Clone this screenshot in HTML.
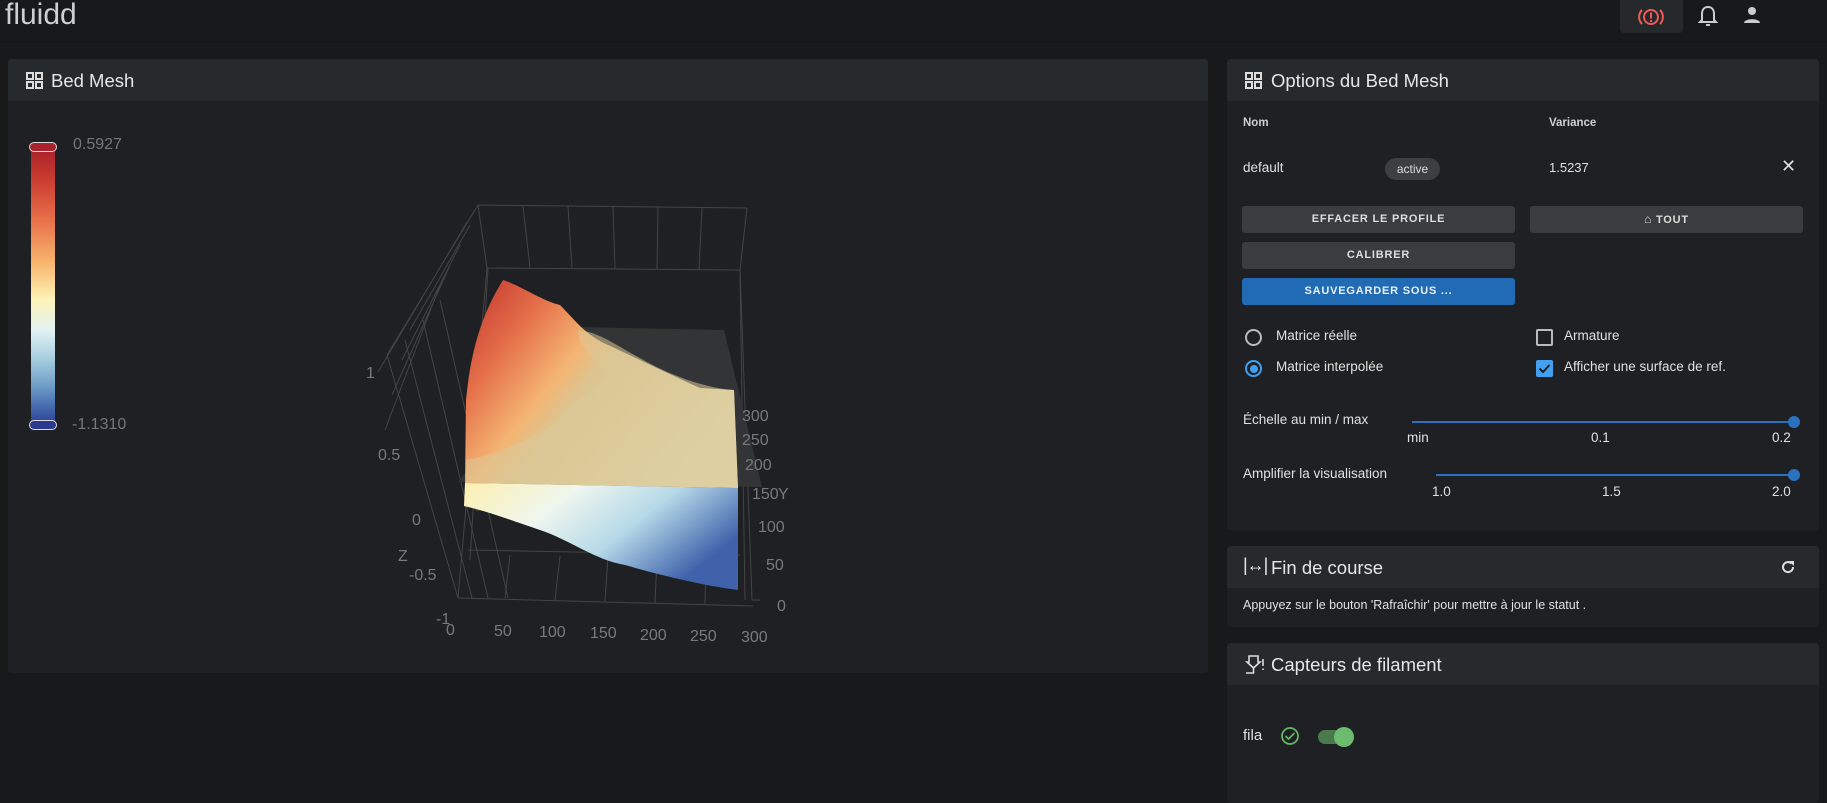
<!DOCTYPE html>
<html><head><meta charset="utf-8"><style>
*{box-sizing:border-box;margin:0;padding:0}
body{width:1827px;height:788px;overflow:hidden;background:#18191b;font-family:"Liberation Sans",sans-serif;color:#e0e0e0;position:relative}
.abs{position:absolute}
.top{left:0;top:0;width:1827px;height:43px;background:#18191b;border-bottom:1px solid #141516}
.card{position:absolute;background:#1f2023;border-radius:4px;overflow:hidden}
.hd{position:absolute;left:0;right:0;top:0;height:42px;background:#272a2d;font-size:18.5px;color:#e6e6e6}
.hd span{position:absolute;top:11px}
.btn{position:absolute;height:27px;background:#3a3c3f;border-radius:3px;font-size:11px;font-weight:bold;letter-spacing:0.8px;color:#ddd;text-align:center;line-height:27px}
.t{position:absolute;font-size:13.5px;color:#e0e0e0;white-space:nowrap}
.track{position:absolute;height:2px;background:#2a72c0}
.knob{position:absolute;width:12px;height:12px;border-radius:50%;background:#2a72c0}
</style></head><body>
<div class="abs top">
 <div class="abs" style="left:5px;top:-2px;font-size:30px;color:#cfcfcf">fluidd</div>
 <div class="abs" style="left:1620px;top:0;width:63px;height:33px;background:#26292b;border-radius:0 0 4px 4px"></div>
 <svg class="abs" style="left:1638px;top:5px" width="26" height="24" viewBox="0 0 26 24"><circle cx="13" cy="12" r="7" fill="none" stroke="#f05a55" stroke-width="2"/><rect x="12" y="7.5" width="2" height="6" fill="#f05a55"/><rect x="12" y="15" width="2" height="2" fill="#f05a55"/><path d="M4 5 A10 10 0 0 0 4 19 M22 5 A10 10 0 0 1 22 19" fill="none" stroke="#f05a55" stroke-width="2"/></svg>
 <svg class="abs" style="left:1698px;top:5px" width="20" height="22" viewBox="0 0 20 22"><path d="M10 2 C6 2 4 5 4 9 L4 15 L2 17 L18 17 L16 15 L16 9 C16 5 14 2 10 2 Z" fill="none" stroke="#ccc" stroke-width="2"/><rect x="8" y="19" width="4" height="2" fill="#ccc"/></svg>
 <svg class="abs" style="left:1743px;top:6px" width="18" height="18" viewBox="0 0 18 18"><circle cx="9" cy="5" r="4" fill="#ccc"/><path d="M1 17 C1 12 17 12 17 17 Z" fill="#ccc"/></svg>
</div>

<div class="card" style="left:8px;top:59px;width:1200px;height:614px">
 <div class="hd"><svg class="abs" style="left:18px;top:13px" width="17" height="17" viewBox="0 0 17 17" fill="none" stroke="#ddd" stroke-width="2"><rect x="1" y="1" width="6" height="6"/><rect x="10" y="1" width="6" height="6"/><rect x="1" y="10" width="6" height="6"/><rect x="10" y="10" width="6" height="6"/></svg><span style="left:43px">Bed Mesh</span></div>
 <div class="abs" style="left:23px;top:85px;width:24px;height:282px;border-radius:3px;background:linear-gradient(#a51f2a 0%,#c93a2f 12%,#e8704a 27%,#f8b46d 42%,#fdf3b6 55%,#e3f2f4 66%,#a7cfe0 76%,#6d9cc7 86%,#3d5da8 95%,#2b3a8f 100%)"></div>
 <div class="abs" style="left:21px;top:83px;width:28px;height:10px;border-radius:5px;background:#a8232d;border:1px solid #ddd"></div>
 <div class="abs" style="left:21px;top:361px;width:28px;height:10px;border-radius:5px;background:#2b3a8f;border:1px solid #ddd"></div>
 <div class="t" style="left:65px;top:77px;font-size:16px;color:#777">0.5927</div>
 <div class="t" style="left:64px;top:357px;font-size:16px;color:#777">-1.1310</div>
</div>

<svg class="abs" style="left:0;top:0" width="1210" height="670" viewBox="0 0 1210 670">
 <defs>
  <linearGradient id="up" x1="0" y1="0" x2="1" y2="0.6">
   <stop offset="0" stop-color="#c0302b"/><stop offset="0.25" stop-color="#e5704a"/><stop offset="0.45" stop-color="#f4b472"/><stop offset="0.55" stop-color="#dcc491"/><stop offset="1" stop-color="#e0d8ae"/>
  </linearGradient>
  <linearGradient id="lo" x1="0" y1="0" x2="1" y2="0.5">
   <stop offset="0" stop-color="#fdf0b0"/><stop offset="0.35" stop-color="#eef6ee"/><stop offset="0.65" stop-color="#b5d9e8"/><stop offset="1" stop-color="#3f62ab"/>
  </linearGradient>
 </defs>
 <g stroke="#444" stroke-width="1" fill="none">
  <path d="M478 205 L747 208 M487 268 L740 270 M478 205 L487 268 M747 208 L740 270"/>
  <path d="M523 206 L530 268 M568 206 L572 268 M613 207 L615 269 M658 207 L657 269 M702 208 L699 270"/>
  <path d="M478 205 L387 355 M467 222 L378 372 M487 268 L458 598"/>
  <path d="M470 225 L410 330 M460 245 L402 360 M450 265 L392 395 M440 285 L385 430"/>
  <path d="M387 355 L458 598 M405 340 L472 598 M423 320 L488 598 M440 300 L508 598"/>
  <path d="M488 268 L470 560 M740 270 L745 600"/>
  <path d="M458 598 L753 606 M468 550 L740 555 M475 510 L520 510"/>
  <path d="M505 598 L510 555 M555 600 L560 556 M605 601 L608 557 M655 603 L657 558 M705 604 L706 559"/>
  <path d="M740 270 L752 600 L760 600"/>
 </g>
 <path d="M578 327 L724 330 L762 487 L458 482 Z" fill="#333436"/>
 <path d="M503 280 C520 285 540 300 560 305 C575 320 585 335 608 345 C630 355 660 370 700 388 L734 390 L738 488 L465 483 L466 400 C470 360 478 320 503 280 Z" fill="url(#up)"/>
 <path d="M578 330 C578 350 600 360 605 378 C600 390 575 395 560 420 C530 440 495 455 466 460 L466 483 L738 488 L734 390 C700 388 660 370 640 358 C620 348 600 332 578 330 Z" fill="#dbc998" opacity="0.55"/>
 <path d="M465 483 L738 488 L738 590 C700 585 660 575 625 565 C595 560 570 540 540 530 C510 520 490 512 464 506 Z" fill="url(#lo)"/>
 <g fill="#7a7a7a" font-size="16" font-family="Liberation Sans, sans-serif">
  <text x="366" y="378">1</text><text x="378" y="460">0.5</text><text x="412" y="525">0</text><text x="398" y="561">Z</text><text x="409" y="580">-0.5</text><text x="436" y="624">-1</text>
  <text x="446" y="635">0</text><text x="494" y="636">50</text><text x="539" y="637">100</text><text x="590" y="638">150</text><text x="640" y="640">200</text><text x="690" y="641">250</text><text x="741" y="642">300</text>
  <text x="742" y="421">300</text><text x="742" y="445">250</text><text x="745" y="470">200</text><text x="752" y="499">150</text><text x="778" y="499">Y</text><text x="758" y="532">100</text><text x="766" y="570">50</text><text x="777" y="611">0</text>
 </g>
</svg>

<div class="card" style="left:1227px;top:59px;width:592px;height:471px">
 <div class="hd"><svg class="abs" style="left:18px;top:13px" width="17" height="17" viewBox="0 0 17 17" fill="none" stroke="#ddd" stroke-width="2"><rect x="1" y="1" width="6" height="6"/><rect x="10" y="1" width="6" height="6"/><rect x="1" y="10" width="6" height="6"/><rect x="10" y="10" width="6" height="6"/></svg><span style="left:44px">Options du Bed Mesh</span></div>
 <div class="t" style="left:16px;top:58px;font-size:11.5px;font-weight:bold;color:#cfcfcf">Nom</div>
 <div class="t" style="left:322px;top:58px;font-size:11.5px;font-weight:bold;color:#cfcfcf">Variance</div>
 <div class="t" style="left:16px;top:101px">default</div>
 <div class="abs" style="left:158px;top:99px;width:55px;height:22px;border-radius:11px;background:#3d3f42;font-size:12px;color:#ddd;text-align:center;line-height:22px">active</div>
 <div class="t" style="left:322px;top:101px;font-size:13px">1.5237</div>
 <div class="t" style="left:554px;top:97px;font-size:18px;color:#ddd">✕</div>
 <div class="btn" style="left:15px;top:147px;width:273px">EFFACER LE PROFILE</div>
 <div class="btn" style="left:303px;top:147px;width:273px"><span style="font-size:12px">&#8962;</span> TOUT</div>
 <div class="btn" style="left:15px;top:183px;width:273px">CALIBRER</div>
 <div class="btn" style="left:15px;top:219px;width:273px;background:#216ab4;color:#e8f0fa">SAUVEGARDER SOUS ...</div>
 <div class="abs" style="left:18px;top:270px;width:17px;height:17px;border:2px solid #bbb;border-radius:50%"></div>
 <div class="t" style="left:49px;top:269px">Matrice réelle</div>
 <div class="abs" style="left:18px;top:301px;width:17px;height:17px;border:2px solid #42a0f0;border-radius:50%"></div>
 <div class="abs" style="left:22.5px;top:305.5px;width:8px;height:8px;background:#42a0f0;border-radius:50%"></div>
 <div class="t" style="left:49px;top:300px">Matrice interpolée</div>
 <div class="abs" style="left:309px;top:270px;width:17px;height:17px;border:2px solid #bbb;border-radius:2px"></div>
 <div class="t" style="left:337px;top:269px">Armature</div>
 <div class="abs" style="left:309px;top:301px;width:17px;height:17px;background:#42a0f0;border-radius:2px"></div>
 <svg class="abs" style="left:309px;top:301px" width="17" height="17"><path d="M3.5 8.5 L7 12 L13.5 5" fill="none" stroke="#1f2023" stroke-width="2"/></svg>
 <div class="t" style="left:337px;top:300px">Afficher une surface de ref.</div>
 <div class="t" style="left:16px;top:353px">Échelle au min / max</div>
 <div class="track" style="left:185px;top:362px;width:383px"></div>
 <div class="knob" style="left:561px;top:357px"></div>
 <div class="t" style="left:180px;top:371px">min</div><div class="t" style="left:364px;top:371px">0.1</div><div class="t" style="left:545px;top:371px">0.2</div>
 <div class="t" style="left:16px;top:407px">Amplifier la visualisation</div>
 <div class="track" style="left:209px;top:415px;width:359px"></div>
 <div class="knob" style="left:561px;top:410px"></div>
 <div class="t" style="left:205px;top:425px">1.0</div><div class="t" style="left:375px;top:425px">1.5</div><div class="t" style="left:545px;top:425px">2.0</div>
</div>

<div class="card" style="left:1227px;top:546px;width:592px;height:81px">
 <div class="hd"><span style="left:16px;top:9px;font-size:18px;letter-spacing:-1px">|↔|</span><span style="left:44px">Fin de course</span>
 <svg class="abs" style="left:553px;top:13px" width="16" height="16" viewBox="0 0 16 16"><path d="M13 8 A5 5 0 1 1 11.5 4.5" fill="none" stroke="#ddd" stroke-width="2"/><path d="M9 2 L14 2 L14 7 Z" fill="#ddd"/></svg></div>
 <div class="t" style="left:16px;top:52px;font-size:12.5px">Appuyez sur le bouton 'Rafraîchir' pour mettre à jour le statut .</div>
</div>

<div class="card" style="left:1227px;top:643px;width:592px;height:160px">
 <div class="hd"><svg class="abs" style="left:16px;top:10px" width="24" height="24" viewBox="0 0 24 24" fill="none" stroke="#ddd" stroke-width="1.6"><path d="M6 3 L15 3 L15 9 L17 9 L10.5 15 L4 9 L6 9 Z"/><path d="M10.5 15 L10.5 20 L3 20"/><path d="M20 6 L20 13 M20 15.5 L20 17"/></svg><span style="left:44px">Capteurs de filament</span></div>
 <div class="t" style="left:16px;top:84px;font-size:15px">fila</div>
 <svg class="abs" style="left:53px;top:83px" width="20" height="20" viewBox="0 0 20 20"><circle cx="10" cy="10" r="8" fill="none" stroke="#5fb760" stroke-width="1.8"/><path d="M5.5 10 L8.5 13 L14.5 7" fill="none" stroke="#5fb760" stroke-width="1.8"/></svg>
 <div class="abs" style="left:91px;top:87px;width:34px;height:14px;border-radius:7px;background:#4a7a4b"></div>
 <div class="abs" style="left:107px;top:84px;width:20px;height:20px;border-radius:50%;background:#6dbb6e"></div>
</div>
</body></html>
